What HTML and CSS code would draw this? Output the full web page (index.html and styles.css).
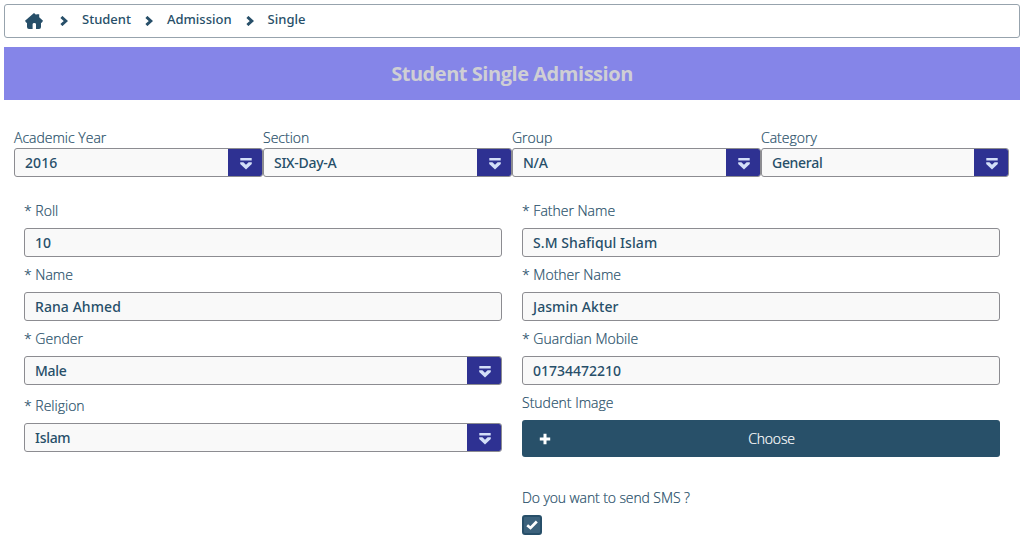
FILE: index.html
```html
<!DOCTYPE html>
<html lang="en">
<head>
<meta charset="utf-8">
<title>Student Single Admission</title>
<link rel="stylesheet" href="styles.css">
</head>
<body>
<svg class="defs" width="0" height="0">
  <symbol id="home" viewBox="0 0 18 16"><path d="M9 0 11.3 2.1V1.2h2.9v3.1L18 7.8 16.8 9.8H16V14a2 2 0 0 1-2 2h-3V11.3q0-1.3-1.7-1.3T7.6 11.3V16H4a2 2 0 0 1-2-2V9.8H1.2L0 7.8z"/></symbol>
  <symbol id="sep" viewBox="0 0 8 10"><path d="M1.4 1 5.8 5 1.4 9" fill="none" stroke="currentColor" stroke-width="3"/></symbol>
  <symbol id="down" viewBox="0 0 12 12"><path d="M.3 1.3h11.4" fill="none" stroke="currentColor" stroke-width="2.4"/><path d="M.2 4.3h3.2L6 6.8l2.6-2.5h3.2v1.6L6 11.6.2 5.9z"/></symbol>
</svg>
<nav class="breadcrumb">
  <svg class="home"><use href="#home"/></svg>
  <svg class="sep"><use href="#sep"/></svg><a class="crumb">Student</a>
  <svg class="sep"><use href="#sep"/></svg><a class="crumb">Admission</a>
  <svg class="sep"><use href="#sep"/></svg><a class="crumb">Single</a>
</nav>
<h1 class="title">Student Single Admission</h1>
<main class="form">
  <section class="filters">
    <div><label class="label">Academic Year</label><div class="select"><span class="value">2016</span><span class="trigger"><svg class="down"><use href="#down"/></svg></span></div></div>
    <div><label class="label">Section</label><div class="select"><span class="value tight">SIX-Day-A</span><span class="trigger"><svg class="down"><use href="#down"/></svg></span></div></div>
    <div><label class="label">Group</label><div class="select"><span class="value tight">N/A</span><span class="trigger"><svg class="down"><use href="#down"/></svg></span></div></div>
    <div><label class="label">Category</label><div class="select"><span class="value tight">General</span><span class="trigger"><svg class="down"><use href="#down"/></svg></span></div></div>
  </section>
  <section class="details">
    <div class="column">
      <div class="field"><label class="label">* Roll</label><div class="input"><span class="value">10</span></div></div>
      <div class="field"><label class="label">* Name</label><div class="input"><span class="value">Rana Ahmed</span></div></div>
      <div class="field field-gender"><label class="label">* Gender</label><div class="select"><span class="value tight">Male</span><span class="trigger"><svg class="down"><use href="#down"/></svg></span></div></div>
      <div class="field"><label class="label">* Religion</label><div class="select"><span class="value tight">Islam</span><span class="trigger"><svg class="down"><use href="#down"/></svg></span></div></div>
    </div>
    <div class="column">
      <div class="field"><label class="label">* Father Name</label><div class="input"><span class="value">S.M Shafiqul Islam</span></div></div>
      <div class="field"><label class="label">* Mother Name</label><div class="input"><span class="value">Jasmin Akter</span></div></div>
      <div class="field"><label class="label">* Guardian Mobile</label><div class="input"><span class="value digits">01734472210</span></div></div>
      <div class="field"><label class="label">Student Image</label>
        <button class="choose"><svg class="plus" viewBox="0 0 12 12"><path d="M6 .8v10.4M.8 6h10.4"/></svg><span class="choose-text">Choose</span></button></div>
      <div class="sms"><label class="label label-sms">Do you want to send SMS ?</label>
        <span class="check"><svg class="tick" viewBox="0 0 12 10"><path d="M1.2 5.2 4.5 8 10.8 1.5"/></svg></span></div>
    </div>
  </section>
</main>
</body>
</html>
```

FILE: styles.css
```css
* { box-sizing: border-box; }
body { margin: 0; padding: 4px 3px 0 4px; background: #fff; color: #274f69; font: 14px/20px "Open Sans", sans-serif; }
svg { display: block; flex: none; fill: currentColor; }
.defs { position: absolute; }
.breadcrumb { display: flex; align-items: center; height: 34px; padding: 0 0 4px 20px; border: 1px solid #97a3ad; border-radius: 3px; font: 500 13px/20px "Noto Sans", sans-serif; }
.home { width: 18px; height: 16px; margin: 4px 17px 0 0; }
.sep { width: 8px; height: 10px; margin: 3px 14px 0 0; }
.crumb { margin-right: 14px; }
.title { display: flex; align-items: center; justify-content: center; height: 53px; margin: 9px 0 0; background: #8585e8; color: #cfcfd4; font: 700 20px/28px "Open Sans", sans-serif; letter-spacing: -.46px; }
.form { padding: 28px 11px 0 10px; }
.filters { display: grid; grid-template-columns: 249px 249px 249px 248px; }
.label { display: block; height: 20px; font-weight: 300; -webkit-text-stroke: .2px currentColor; white-space: nowrap; }
.label-sms { letter-spacing: -.1px; }
.input, .select { display: flex; align-items: center; height: 29px; border: 1px solid #8c8c91; border-radius: 3px; background: #f9f9f9; overflow: hidden; }
.value { flex: 1; padding-left: 10px; font: 500 14px/20px "Noto Sans", sans-serif; letter-spacing: .07px; white-space: nowrap; }
.tight { letter-spacing: -.3px; }
.digits { letter-spacing: 0; }
.trigger { display: flex; align-items: center; justify-content: center; width: 34px; height: 27px; padding: 3px 0 0 2px; background: #2e3192; color: #d3def8; }
.down { width: 12px; height: 12px; }
.details { display: grid; grid-template-columns: 478px 478px; column-gap: 20px; padding: 24px 10px 0; }
.field { margin-bottom: 8px; }
.field .label { margin-bottom: 7px; }
.field-gender { margin-bottom: 11px; }
.choose { display: flex; align-items: center; width: 478px; height: 37px; padding: 0 0 0 17px; border: 0; border-radius: 3px; background: #285069; color: #fff; font: 300 14px/20px "Open Sans", sans-serif; letter-spacing: -.15px; -webkit-text-stroke: .2px currentColor; }
.plus { width: 12px; height: 12px; fill: none; stroke: currentColor; stroke-width: 3; }
.choose-text { flex: 1; text-align: center; padding-right: 8px; }
.sms { padding-top: 23px; }
.sms .label { margin-bottom: 7px; }
.check { display: flex; align-items: center; justify-content: center; width: 20px; height: 20px; border: 2px solid #274f69; border-radius: 3px; background: #3c627c; }
.tick { width: 12px; height: 10px; fill: none; stroke: #fff; stroke-width: 2.7; }
```
